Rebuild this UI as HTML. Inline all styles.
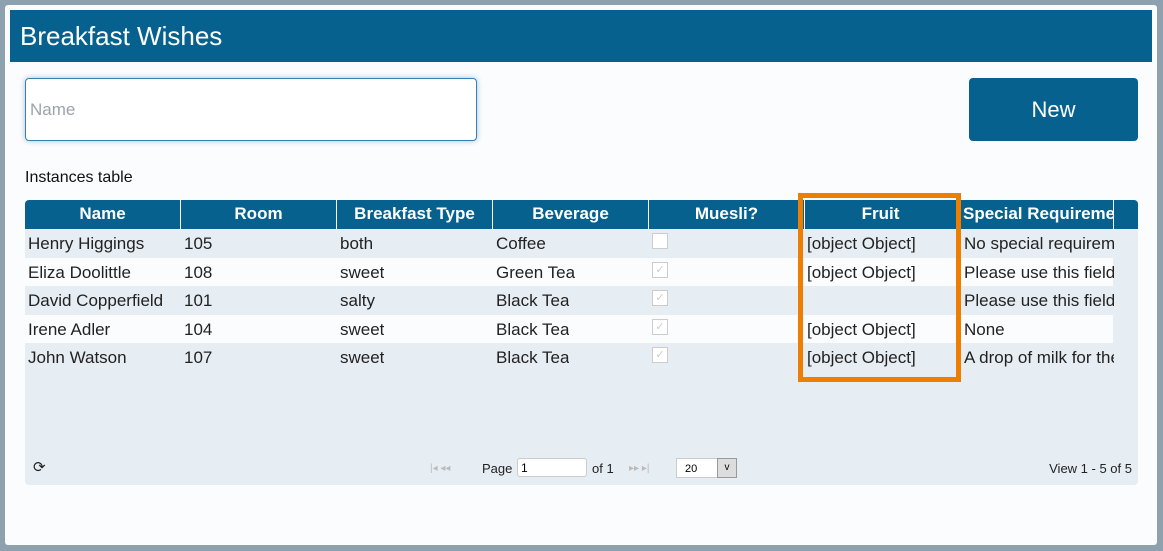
<!DOCTYPE html>
<html><head><meta charset="utf-8"><style>
body{margin:0;width:1163px;height:551px;background:#8da2ae;font-family:"Liberation Sans",sans-serif;position:relative;overflow:hidden}
.card{position:absolute;left:5px;top:5px;width:1152px;height:540px;background:#fbfcfd;border-radius:3px}
.hdr{position:absolute;left:10px;top:10px;width:1142px;height:52px;background:#07618f;color:#fff;font-size:26px;line-height:52px;padding-left:10px;box-sizing:border-box}
.inp{position:absolute;left:25px;top:78px;width:452px;height:63px;box-sizing:border-box;border:1px solid #3a7fb0;border-radius:4px;background:#fff;box-shadow:0 0 6px #9cc3dc;color:#9aa4ab;font-size:17px;line-height:61px;padding-left:4px}
.btn{position:absolute;left:969px;top:78px;width:169px;height:63px;background:#07618f;border-radius:4px;color:#fff;font-size:22px;text-align:center;line-height:63px}
.lbl{position:absolute;left:25px;top:169px;font-size:16px;color:#111}
.tbl{position:absolute;left:25px;top:200px;width:1113px;height:285px;background:#e6edf3;border-radius:4px;overflow:hidden}
.th{position:absolute;top:0;height:29px;background:#07618f;color:#fff;font-weight:bold;font-size:17px;line-height:28px;text-align:center;border-right:1px solid #fff;box-sizing:border-box;white-space:nowrap;overflow:hidden}
.row{position:absolute;left:0;width:1088px;height:29px;font-size:17px;color:#222;line-height:29px}
.row span{position:absolute;white-space:nowrap;overflow:hidden}
.cb{position:absolute;left:627px;top:4px;width:14px;height:14px;border:1px solid #ccc;background:#fff;color:#ccc;font-size:11px;line-height:14px;text-align:center}
.orange{position:absolute;left:798px;top:193px;width:163px;height:189px;box-sizing:border-box;border:5px solid #ee7d00}
.ft{position:absolute;top:261px;font-size:13px;color:#222}
</style></head><body>
<div class="card"></div>
<div class="hdr">Breakfast Wishes</div>
<div class="inp">Name</div>
<div class="btn">New</div>
<div class="lbl">Instances table</div>
<div class="tbl">
<div class="th" style="left:0;width:156px">Name</div>
<div class="th" style="left:156px;width:156px">Room</div>
<div class="th" style="left:312px;width:156px">Breakfast Type</div>
<div class="th" style="left:468px;width:156px">Beverage</div>
<div class="th" style="left:624px;width:156px">Muesli?</div>
<div class="th" style="left:780px;width:152px">Fruit</div>
<div class="th" style="left:932px;width:157px;text-align:left;padding-left:6px">Special Requirements</div>
<div class="th" style="left:1089px;width:24px;border:none"></div>

<div class="row" style="top:29px;background:#e6edf3"><span style="left:3px">Henry Higgings</span><span style="left:159px">105</span><span style="left:315px">both</span><span style="left:471px">Coffee</span><div class="cb"></div><span style="left:782px">[object Object]</span><span style="left:939px;width:150px">No special requirements</span></div>
<div class="row" style="top:58px;background:#fbfcfd"><span style="left:3px">Eliza Doolittle</span><span style="left:159px">108</span><span style="left:315px">sweet</span><span style="left:471px">Green Tea</span><div class="cb">✓</div><span style="left:782px">[object Object]</span><span style="left:939px;width:150px">Please use this field</span></div>
<div class="row" style="top:86px;background:#e6edf3"><span style="left:3px">David Copperfield</span><span style="left:159px">101</span><span style="left:315px">salty</span><span style="left:471px">Black Tea</span><div class="cb">✓</div><span style="left:939px;width:150px">Please use this field</span></div>
<div class="row" style="top:115px;background:#fbfcfd"><span style="left:3px">Irene Adler</span><span style="left:159px">104</span><span style="left:315px">sweet</span><span style="left:471px">Black Tea</span><div class="cb">✓</div><span style="left:782px">[object Object]</span><span style="left:939px;width:150px">None</span></div>
<div class="row" style="top:143px;background:#e6edf3"><span style="left:3px">John Watson</span><span style="left:159px">107</span><span style="left:315px">sweet</span><span style="left:471px">Black Tea</span><div class="cb">✓</div><span style="left:782px">[object Object]</span><span style="left:939px;width:150px">A drop of milk for the tea</span></div>

<div class="ft" style="left:8px;top:258px;font-size:15px">⟳</div>
<div class="ft" style="left:405px;color:#bbb;font-size:10px;top:263px">|◂ ◂◂</div>
<div class="ft" style="left:457px">Page</div>
<div style="position:absolute;left:492px;top:258px;width:70px;height:19px;background:#fff;border:1px solid #ccc;border-radius:3px;font-size:12px;line-height:19px;padding-left:3px;box-sizing:border-box">1</div>
<div class="ft" style="left:567px">of 1</div>
<div class="ft" style="left:604px;color:#bbb;font-size:10px;top:263px">▸▸ ▸|</div>
<div style="position:absolute;left:651px;top:258px;width:61px;height:20px;background:#fff;border:1px solid #ccc;font-size:11px;line-height:20px;padding-left:8px;box-sizing:border-box">20</div>
<div style="position:absolute;left:692px;top:258px;width:20px;height:20px;background:#ddd;border:1px solid #999;box-sizing:border-box;font-size:10px;text-align:center;line-height:18px">v</div>
<div class="ft" style="right:6px">View 1 - 5 of 5</div>
</div>
<div class="orange"></div>
</body></html>
